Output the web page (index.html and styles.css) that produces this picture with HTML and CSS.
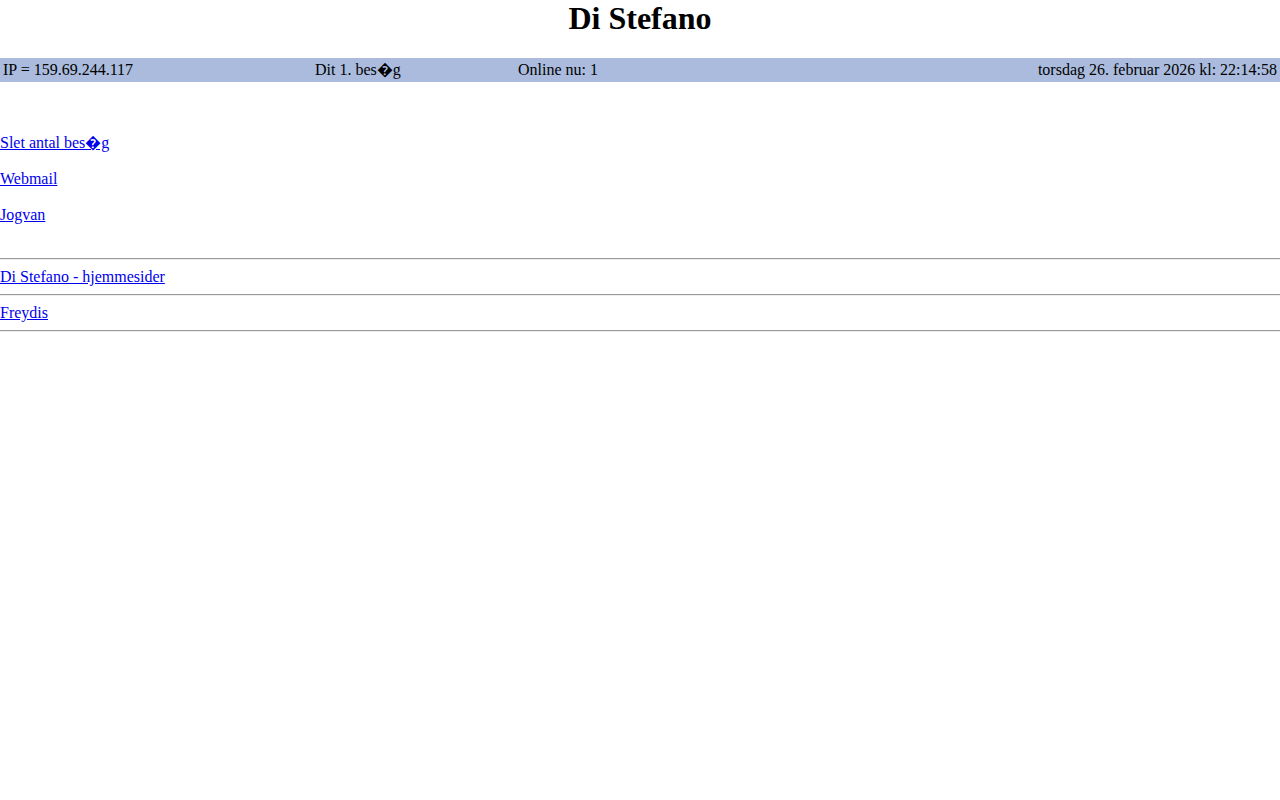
FILE: index.html
```html
<!DOCTYPE html>
<html>
<head>
<meta charset="utf-8">
<title>Di Stefano</title>
<link rel="stylesheet" href="styles.css">
</head>
<body>
<h1 class="title">Di Stefano</h1>
<div class="bar">
  <div class="cell cell-ip">IP = 159.69.244.117</div>
  <div class="cell cell-visit">Dit 1. bes�g</div>
  <div class="cell cell-online">Online nu: 1</div>
  <div class="cell cell-date">torsdag 26. februar 2026 kl: 22:14:58</div>
</div>
<div class="nav">
  <a href="#">Slet antal bes�g</a>
  <a href="#">Webmail</a>
  <a href="#">Jogvan</a>
</div>
<div class="sites">
  <hr class="rule">
  <a class="site" href="#">Di Stefano - hjemmesider</a>
  <hr class="rule">
  <a class="site" href="#">Freydis</a>
  <hr class="rule">
</div>
</body>
</html>
```
FILE: styles.css
```css
html, body {
  margin: 0;
  padding: 0;
  background: #fff;
}
body {
  font-family: "Liberation Serif", "Times New Roman", serif;
  font-size: 16px;
  color: #000;
}
.title {
  margin: 0 0 21px;
  font-size: 32px;
  line-height: 37px;
  font-weight: bold;
  text-align: center;
}
.bar {
  display: flex;
  height: 24px;
  align-items: center;
  background: #aabbdd;
  line-height: 18px;
}
.cell {
  padding: 0 3px;
  white-space: nowrap;
}
.cell-ip { width: 306px; }
.cell-visit { width: 197px; }
.cell-online { flex: 1; }
.cell-date { text-align: right; }
a {
  color: #0000ee;
  text-decoration: underline;
}
.nav {
  display: flex;
  flex-direction: column;
  align-items: flex-start;
  gap: 18px;
  padding-top: 52px;
  line-height: 18px;
}
.sites {
  display: flex;
  flex-direction: column;
  align-items: flex-start;
  margin-top: 34px;
  line-height: 18px;
}
.rule {
  align-self: stretch;
  margin: 0;
  height: 0;
  border: 0;
  border-top: 1px solid #9a9a9a;
  border-bottom: 1px solid #eeeeee;
}
.site {
  margin: 8px 0;
}
```
